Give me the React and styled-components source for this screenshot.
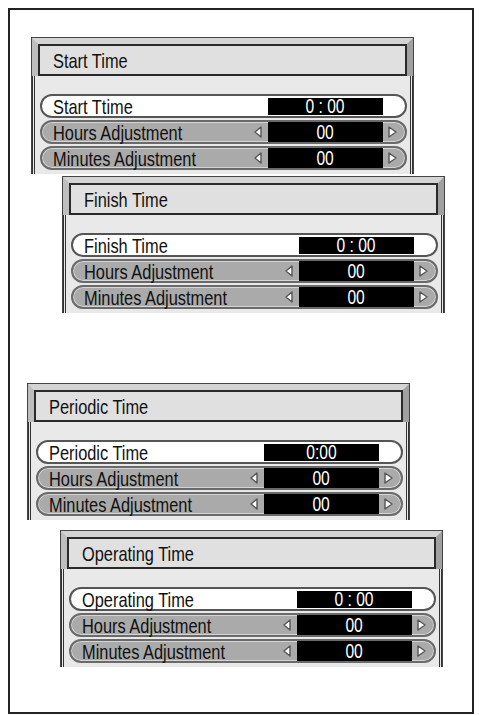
import React from 'react';
import styled, { createGlobalStyle } from 'styled-components';

const GlobalStyle = createGlobalStyle`
  html, body {
    margin: 0;
    padding: 0;
    background: #fff;
  }
  body {
    font-family: "Liberation Sans", Arial, sans-serif;
    color: #111;
  }
`;

const panels = [
  { title: 'Start Time', main: 'Start Ttime', value: '0 : 00', offset: 21, gap: 27 },
  { title: 'Finish Time', main: 'Finish Time', value: '0 : 00', offset: 52, gap: 2 },
  { title: 'Periodic Time', main: 'Periodic Time', value: '0:00', offset: 17, gap: 70 },
  { title: 'Operating Time', main: 'Operating Time', value: '0 : 00', offset: 50, gap: 10 },
];

const LeftArrow = () => (
  <svg width="8" height="12" viewBox="0 0 8 12">
    <polygon points="7,1 1,6 7,11" fill="#fff" stroke="#555" strokeWidth="1.4" strokeLinejoin="round" />
  </svg>
);

const RightArrow = () => (
  <svg width="9" height="12" viewBox="0 0 9 12">
    <polygon points="1,1 8,6 1,11" fill="#fff" stroke="#555" strokeWidth="1.4" strokeLinejoin="round" />
  </svg>
);

const SettingRow = ({ label, value, active }) => (
  <Row $active={active}>
    <Label><Narrow>{label}</Narrow></Label>
    <ArrowSlot>{!active && <LeftArrow />}</ArrowSlot>
    <Value $active={active}><Narrow $center>{value}</Narrow></Value>
    <CapSlot>{!active && <RightArrow />}</CapSlot>
  </Row>
);

const TimerPanel = ({ panel }) => (
  <Panel $offset={panel.offset} $gap={panel.gap}>
    <Bevel>
      <Header><Narrow>{panel.title}</Narrow></Header>
    </Bevel>
    <Body>
      <SettingRow label={panel.main} value={panel.value} active />
      <SettingRow label="Hours Adjustment" value="00" />
      <SettingRow label="Minutes Adjustment" value="00" />
    </Body>
  </Panel>
);

const App = () => (
  <>
    <GlobalStyle />
    <Frame>
      {panels.map(p => <TimerPanel key={p.title} panel={p} />)}
    </Frame>
  </>
);

const Frame = styled.div`
  box-sizing: border-box;
  margin: 8px 0 0 8px;
  width: 466px;
  height: 706px;
  border: 2px solid #222;
  display: flex;
  flex-direction: column;
`;

const Panel = styled.section`
  width: 383px;
  box-sizing: border-box;
  margin-left: ${p => p.$offset}px;
  margin-top: ${p => p.$gap}px;
  border-top: 1px solid #444;
  border-left: 1px solid #444;
  border-right: 1px solid #444;
`;

const Bevel = styled.div`
  border-style: solid;
  border-width: 6px 6px 0 6px;
  border-color: #d4d4d4 #a0a0a0 transparent #bebebe;
`;

const Header = styled.div`
  height: 32px;
  box-sizing: border-box;
  border: 2px solid #2a2a2a;
  background: #e0e0e0;
  display: flex;
  align-items: center;
  padding-left: 13px;
  font-size: 21px;
  line-height: 1;
`;

const Body = styled.div`
  border-left: 3px double #333;
  border-right: 3px double #333;
  background: #e9e9e9;
  padding: 18px 3px 4px 5px;
  display: flex;
  flex-direction: column;
  gap: 2px;
`;

const Row = styled.div`
  height: 24px;
  box-sizing: border-box;
  border-radius: 12px;
  border: 2px solid ${p => (p.$active ? '#555' : '#6a6a6a')};
  background: ${p => (p.$active ? '#fff' : '#aaaaaa')};
  box-shadow: inset 0 0 0 1px ${p => (p.$active ? '#fff' : '#d4d4d4')};
  display: flex;
  align-items: center;
  padding-left: 11px;
  font-size: 21px;
  line-height: 1;
`;

const Label = styled.div`
  flex: 1;
  color: #111;
`;

const Narrow = styled.span`
  display: inline-block;
  white-space: nowrap;
  transform: scaleX(0.78);
  transform-origin: ${p => (p.$center ? 'center' : 'left')} center;
`;

const ArrowSlot = styled.div`
  width: 8px;
  margin-right: 6px;
  display: flex;
  align-items: center;
`;

const Value = styled.div`
  width: 115px;
  height: ${p => (p.$active ? 17 : 20)}px;
  background: #000;
  color: #fff;
  font-size: 20px;
  display: flex;
  align-items: center;
  justify-content: center;
`;

const CapSlot = styled.div`
  width: 22px;
  display: flex;
  align-items: center;
  padding-left: 5px;
  box-sizing: border-box;
`;

export default App;
